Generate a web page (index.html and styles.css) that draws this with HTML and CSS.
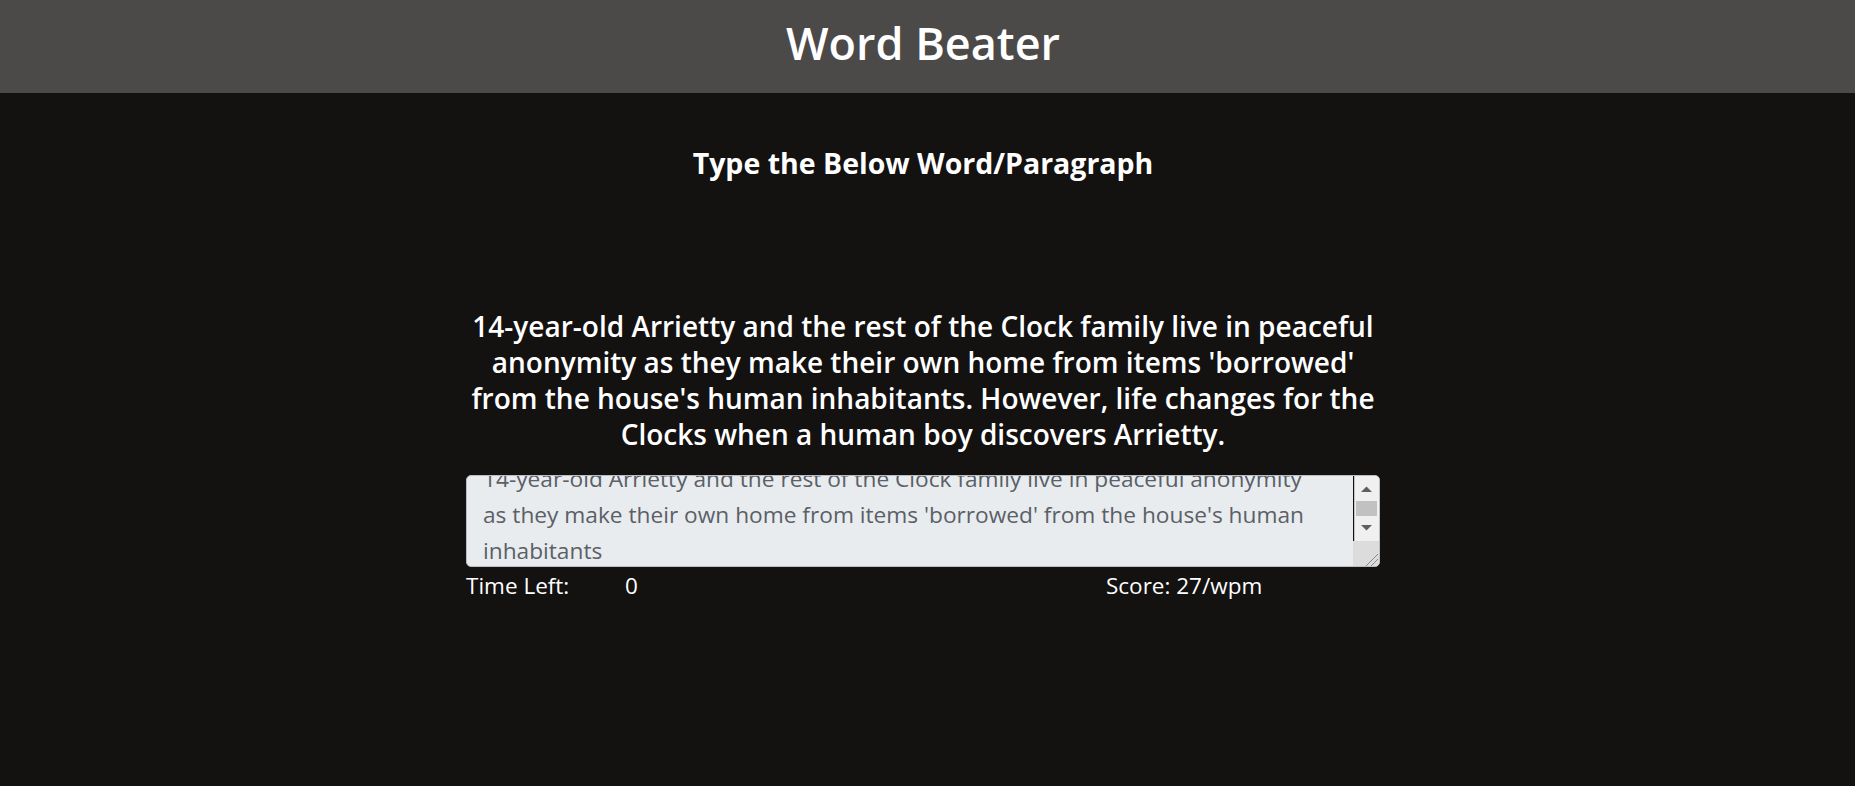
FILE: index.html
```html
<!DOCTYPE html>
<html lang="en">
<head>
<meta charset="utf-8">
<title>Word Beater</title>
<link rel="stylesheet" href="styles.css">
</head>
<body>
<header class="topbar">
  <h1 class="brand">Word Beater</h1>
</header>
<div class="stage">
  <main class="game">
    <h2 class="prompt-title">Type the Below Word/Paragraph</h2>
    <p class="passage">14-year-old Arrietty and the rest of the Clock family live in peaceful anonymity as they make their own home from items 'borrowed' from the house's human inhabitants. However, life changes for the Clocks when a human boy discovers Arrietty.</p>
    <div class="typebox">
      <div class="typebox-view">
        <div class="typebox-text">14-year-old Arrietty and the rest of the Clock family live in peaceful anonymity as they make their own home from items 'borrowed' from the house's human inhabitants</div>
      </div>
      <svg class="scrollbar" width="26" height="90" viewBox="0 0 26 90">
        <rect x="0" y="0" width="26" height="65" fill="#f0f0f0"/>
        <rect x="0" y="0" width="1.2" height="65" fill="#111"/>
        <polygon points="8,16 19,16 13.5,10.5" fill="#606060"/>
        <rect x="3" y="25" width="21" height="15" fill="#c1c1c1"/>
        <polygon points="8,49 19,49 13.5,54.5" fill="#606060"/>
        <rect x="0" y="65" width="26" height="25" fill="#dcdcdc"/>
        <line x1="13" y1="90" x2="25" y2="78" stroke="#8a8a8a" stroke-width="1"/>
        <line x1="18" y1="90" x2="25" y2="83" stroke="#8a8a8a" stroke-width="1"/>
      </svg>
    </div>
    <div class="stats">
      <span class="stat-label">Time Left:</span>
      <span class="stat-value">0</span>
      <span class="stat-score">Score: 27/wpm</span>
    </div>
  </main>
</div>
</body>
</html>
```

FILE: styles.css
```css
body {
  margin: 0;
  background: #141111;
  color: #ffffff;
  font-family: "Open Sans", "Noto Sans", sans-serif;
}

.topbar {
  background: #4b4a49;
  height: 93px;
  box-sizing: border-box;
  padding: 20px 9px 0 0;
  display: flex;
  justify-content: center;
}

.brand {
  margin: 0;
  font-size: 45px;
  line-height: 45px;
  font-weight: 600;
}

.stage {
  padding-right: 9px;
}

.game {
  width: 914px;
  margin: 0 auto;
}

.prompt-title {
  margin: 52px 0 0;
  font-size: 28.5px;
  line-height: 36px;
  font-weight: 700;
  text-align: center;
}

.passage {
  margin: 127px 0 23px;
  font-size: 28px;
  line-height: 36px;
  font-weight: 600;
  text-align: center;
}

.typebox {
  height: 92px;
  box-sizing: border-box;
  border: 1px solid #b9bec4;
  border-radius: 5px;
  background: #e9ecef;
  display: flex;
  overflow: hidden;
}

.typebox-view {
  flex: 1;
  overflow: hidden;
  padding: 0 30px 0 16px;
}

.typebox-text {
  margin-top: -15px;
  font-size: 22.7px;
  line-height: 36px;
  color: #5a6066;
}

.scrollbar {
  display: block;
  flex: none;
}

.stats {
  margin-top: 5px;
  display: grid;
  grid-template-columns: 159px 481px auto;
  font-size: 22.5px;
  line-height: 28px;
}
```
